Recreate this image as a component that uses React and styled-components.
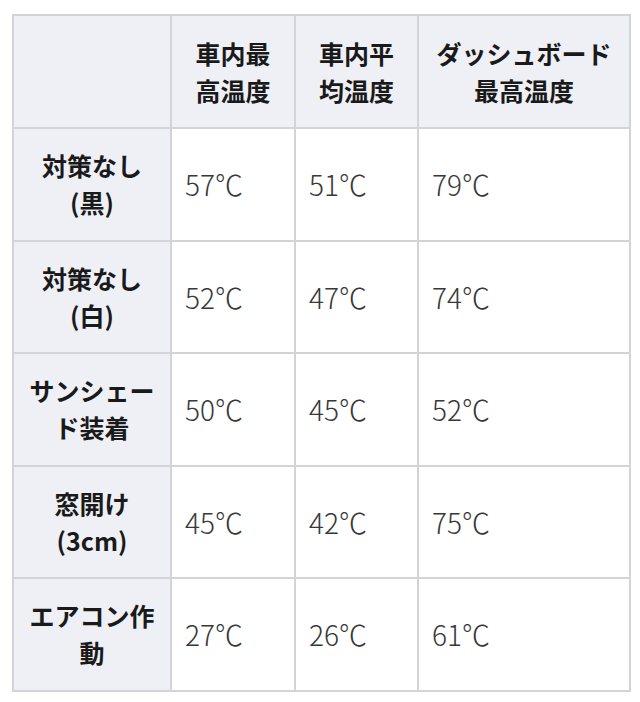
import React from "react";
import styled, { createGlobalStyle } from "styled-components";

const GlobalStyle = createGlobalStyle`
  html, body {
    margin: 0;
    padding: 0;
    background: #ffffff;
  }
  body {
    font-family: "Noto Sans CJK JP", "Noto Sans", sans-serif;
  }
`;

const Page = styled.div`
  box-sizing: border-box;
  width: 640px;
  height: 702px;
  padding: 14px 0 0 12px;
`;

const Table = styled.table`
  border-collapse: collapse;
  width: 617px;
  table-layout: fixed;
  color: #1a1a1a;
`;

const Row = styled.tr`
  height: ${(p) => (p.$head ? 113 : 112.5)}px;
`;

const HeadCell = styled.th`
  background: #eef0f6;
  border: 2px solid #d4d4d6;
  font-size: 25px;
  font-weight: 700;
  line-height: 37px;
  text-align: center;
  vertical-align: middle;
  white-space: nowrap;
  padding: 0 4px;
`;

const DataCell = styled.td`
  background: #ffffff;
  border: 2px solid #d4d4d6;
  font-size: 28px;
  font-weight: 300;
  color: #383838;
  text-align: left;
  vertical-align: middle;
  padding: 0 0 0 13px;
`;

const cols = [
  { w: 158, label: "" },
  { w: 124, label: ["車内最", "高温度"] },
  { w: 123, label: ["車内平", "均温度"] },
  { w: 212, label: ["ダッシュボード", "最高温度"] },
];

const rows = [
  { label: ["対策なし", "(黒)"], values: ["57℃", "51℃", "79℃"] },
  { label: ["対策なし", "(白)"], values: ["52℃", "47℃", "74℃"] },
  { label: ["サンシェー", "ド装着"], values: ["50℃", "45℃", "52℃"] },
  { label: ["窓開け", "(3cm)"], values: ["45℃", "42℃", "75℃"] },
  { label: ["エアコン作", "動"], values: ["27℃", "26℃", "61℃"] },
];

const Lines = ({ lines }) =>
  Array.isArray(lines)
    ? lines.map((l, i) => (
        <React.Fragment key={i}>
          {i > 0 && <br />}
          {l}
        </React.Fragment>
      ))
    : lines;

const App = () => {
  return (
    <Page>
      <GlobalStyle />
      <Table>
        <colgroup>
          {cols.map((c, i) => (
            <col key={i} style={{ width: c.w }} />
          ))}
        </colgroup>
        <thead>
          <Row $head>
            {cols.map((c, i) => (
              <HeadCell key={i}>
                <Lines lines={c.label} />
              </HeadCell>
            ))}
          </Row>
        </thead>
        <tbody>
          {rows.map((r, i) => (
            <Row key={i}>
              <HeadCell scope="row">
                <Lines lines={r.label} />
              </HeadCell>
              {r.values.map((v, j) => (
                <DataCell key={j}>{v}</DataCell>
              ))}
            </Row>
          ))}
        </tbody>
      </Table>
    </Page>
  );
};

export default App;
